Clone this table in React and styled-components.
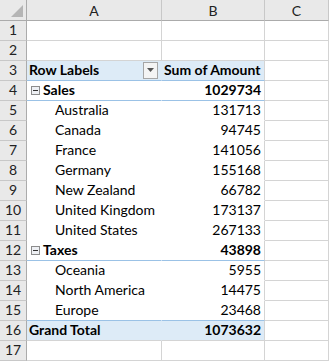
import React from "react";
import styled, { createGlobalStyle, css } from "styled-components";

const Global = createGlobalStyle`
  html, body { margin: 0; padding: 0; background: #fff; }
  body { font-family: Lato, "Open Sans", sans-serif; }
`;

const GRID = "#d4d4d4";
const BLUE_BG = "#ddebf7";
const BLUE_LINE = "#9bc2e6";

const Sheet = styled.div`
  display: grid;
  grid-template-columns: 27px 135px 103px 64px;
  grid-template-rows: 21px repeat(17, 20px);
  width: 329px;
  font-family: Lato, "Open Sans", sans-serif;
  font-size: 14px;
  color: #000;
`;

const Corner = styled.div`
  background: #e9e9e9;
  border-right: 1px solid #ababab;
  border-bottom: 1px solid #ababab;
  display: flex;
  align-items: flex-end;
  justify-content: flex-end;
  padding: 0 3px 3px 0;
  box-sizing: border-box;
`;

const ColHeader = styled.div`
  background: #e9e9e9;
  border-right: 1px solid #c8c8c8;
  border-bottom: 1px solid #ababab;
  display: flex;
  align-items: center;
  justify-content: center;
  color: #222;
  font-size: 14px;
  box-sizing: border-box;
  padding-top: 1px;
`;

const RowHeader = styled.div`
  background: #e9e9e9;
  border-right: 1px solid #ababab;
  border-bottom: 1px solid #c8c8c8;
  display: flex;
  align-items: flex-end;
  justify-content: center;
  color: #222;
  font-size: 14px;
  line-height: 18px;
  box-sizing: border-box;
  padding-bottom: 1px;
`;

const Cell = styled.div`
  box-sizing: border-box;
  display: flex;
  align-items: flex-end;
  line-height: 18px;
  padding: 0 3px 1px ${(p) => p.$indent ?? 2}px;
  white-space: nowrap;
  overflow: hidden;
  border-right: 1px solid ${(p) => (p.$hideRight ? "transparent" : GRID)};
  border-bottom: 1px solid
    ${(p) =>
      p.$blueBottom ? BLUE_LINE : p.$hideBottom ? "transparent" : GRID};
  background: ${(p) => (p.$blue ? BLUE_BG : "#fff")};
  justify-content: ${(p) => (p.$right ? "flex-end" : "flex-start")};
  font-weight: ${(p) => (p.$bold ? 700 : 400)};
  ${(p) =>
    p.$between &&
    css`
      justify-content: space-between;
      align-items: center;
      padding-right: 3px;
    `}
`;

const Label = styled.span`
  align-self: flex-end;
`;

const FilterButton = styled.span`
  width: 13px;
  height: 15px;
  border: 1px solid #a6a6a6;
  background: #f4f4f4;
  display: flex;
  align-items: center;
  justify-content: center;
`;

const Toggle = styled.span`
  width: 7px;
  height: 7px;
  border: 1px solid #8c8c8c;
  background: #eef0f4;
  margin: 0 3px 4px 0;
  position: relative;
  align-self: flex-end;
  flex: none;
  &::after {
    content: "";
    position: absolute;
    left: 1px;
    right: 1px;
    top: 3px;
    height: 1px;
    background: #333;
  }
`;

const data = [
  { type: "group", label: "Sales", value: "1029734" },
  { type: "item", label: "Australia", value: "131713" },
  { type: "item", label: "Canada", value: "94745" },
  { type: "item", label: "France", value: "141056" },
  { type: "item", label: "Germany", value: "155168" },
  { type: "item", label: "New Zealand", value: "66782" },
  { type: "item", label: "United Kingdom", value: "173137" },
  { type: "item", label: "United States", value: "267133" },
  { type: "group", label: "Taxes", value: "43898" },
  { type: "item", label: "Oceania", value: "5955" },
  { type: "item", label: "North America", value: "14475" },
  { type: "item", label: "Europe", value: "23468" },
];

function PivotRow({ row, num, lastBeforeTotal }) {
  const group = row.type === "group";
  const blueBottom = group || lastBeforeTotal;
  return (
    <>
      <RowHeader>{num}</RowHeader>
      <Cell
        $hideRight
        $hideBottom
        $blueBottom={blueBottom}
        $bold={group}
        $indent={group ? 4 : 28}
      >
        {group && <Toggle />}
        {row.label}
      </Cell>
      <Cell $right $hideBottom $blueBottom={blueBottom} $bold={group}>
        {row.value}
      </Cell>
      <Cell />
    </>
  );
}

export default function App() {
  return (
    <>
      <Global />
      <Sheet>
        <Corner>
          <svg width="12" height="12" viewBox="0 0 12 12">
            <polygon points="12,0 12,12 0,12" fill="#b5b5b5" />
          </svg>
        </Corner>
        <ColHeader>A</ColHeader>
        <ColHeader>B</ColHeader>
        <ColHeader>C</ColHeader>

        {[1, 2].map((n) => (
          <React.Fragment key={n}>
            <RowHeader>{n}</RowHeader>
            <Cell />
            <Cell />
            <Cell />
          </React.Fragment>
        ))}

        <RowHeader>3</RowHeader>
        <Cell $blue $hideRight $blueBottom $bold $between>
          <Label>Row Labels</Label>
          <FilterButton>
            <svg width="7" height="4" viewBox="0 0 7 4">
              <polygon points="0,0 7,0 3.5,4" fill="#555" />
            </svg>
          </FilterButton>
        </Cell>
        <Cell $blue $blueBottom $bold>
          Sum of Amount
        </Cell>
        <Cell />

        {data.map((row, i) => (
          <PivotRow
            key={row.label}
            row={row}
            num={i + 4}
            lastBeforeTotal={i === data.length - 1}
          />
        ))}

        <RowHeader>16</RowHeader>
        <Cell $blue $hideRight $bold>
          Grand Total
        </Cell>
        <Cell $blue $right $bold>
          1073632
        </Cell>
        <Cell />

        <RowHeader>17</RowHeader>
        <Cell />
        <Cell />
        <Cell />
      </Sheet>
    </>
  );
}
